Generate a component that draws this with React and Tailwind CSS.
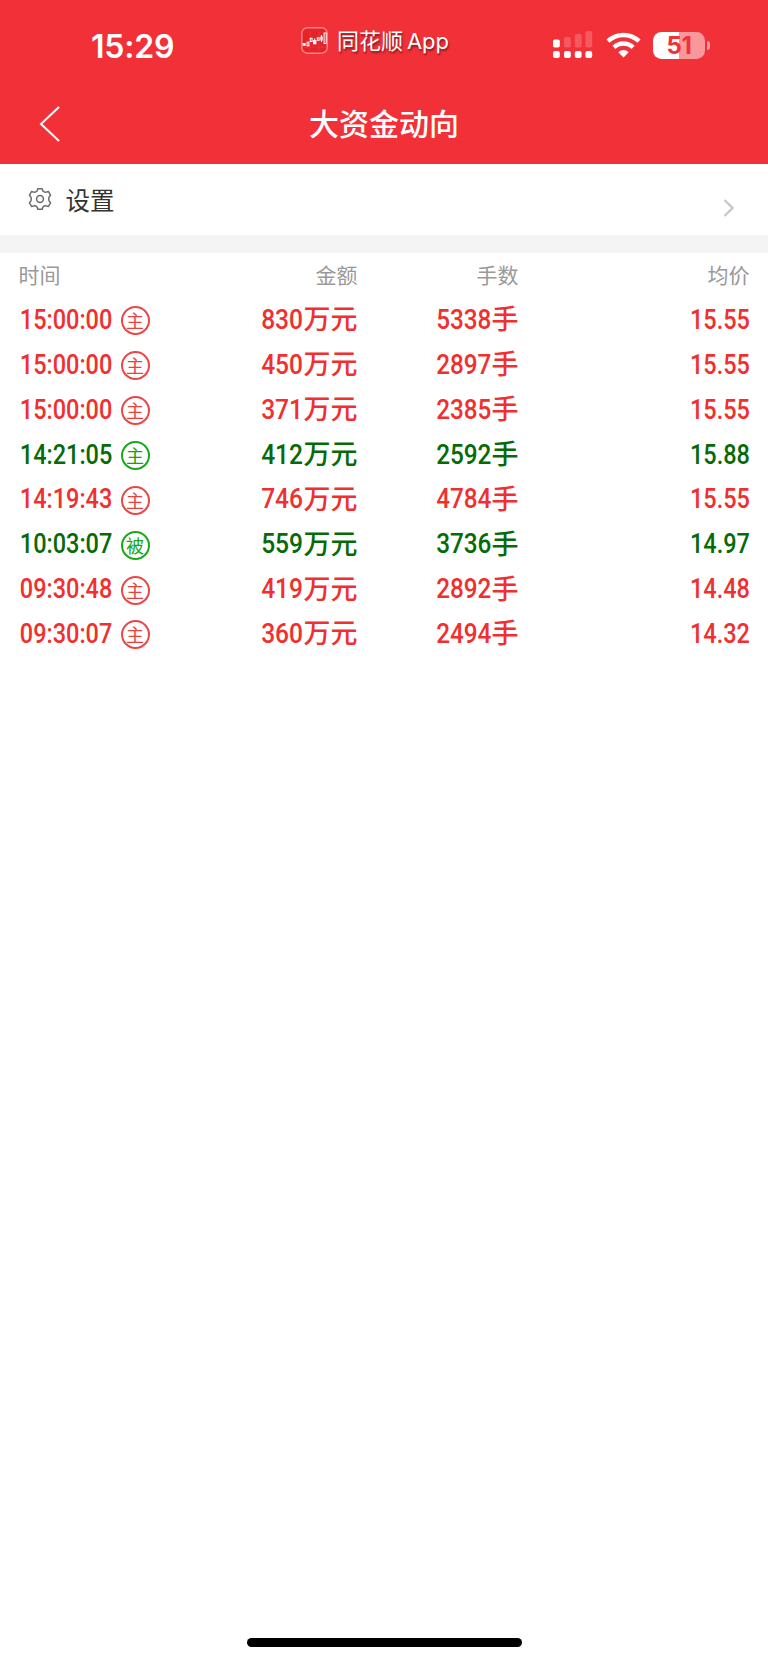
import clsx from 'clsx';

const TRADES = [
    { time: '15:00:00', kind: '主', amount: '830', hands: '5338', price: '15.55', side: 'buy' },
    { time: '15:00:00', kind: '主', amount: '450', hands: '2897', price: '15.55', side: 'buy' },
    { time: '15:00:00', kind: '主', amount: '371', hands: '2385', price: '15.55', side: 'buy' },
    { time: '14:21:05', kind: '主', amount: '412', hands: '2592', price: '15.88', side: 'sell' },
    { time: '14:19:43', kind: '主', amount: '746', hands: '4784', price: '15.55', side: 'buy' },
    { time: '10:03:07', kind: '被', amount: '559', hands: '3736', price: '14.97', side: 'sell' },
    { time: '09:30:48', kind: '主', amount: '419', hands: '2892', price: '14.48', side: 'buy' },
    { time: '09:30:07', kind: '主', amount: '360', hands: '2494', price: '14.32', side: 'buy' },
];

const SIDE_CONFIG = {
    buy:  { text: 'text-[#f0302e]', badge: 'border-[#ec4646] text-[#ea4040]' },
    sell: { text: 'text-[#066b06]', badge: 'border-[#1aa81a] text-[#14a514]' },
};

const COLUMNS = 'grid grid-cols-[140px_199px_161px_231px] pl-[18.5px]';

function SignalIcon() {
    return (
        <svg className="h-[28px] w-[40px]" viewBox="0 0 40 28" fill="white">
            <rect x="0" y="8.5" width="6.8" height="8" rx="1.7" />
            <rect x="11" y="6" width="6.8" height="10.5" rx="1.7" opacity=".2" />
            <rect x="21.8" y="3" width="6.8" height="13.5" rx="1.7" opacity=".2" />
            <rect x="32.4" y="0" width="6.8" height="16.5" rx="1.7" opacity=".2" />
            {[0, 11, 21.8, 32.4].map(x => <rect key={x} x={x} y="20" width="6.8" height="7" rx="2" />)}
        </svg>
    );
}

function WifiIcon() {
    return (
        <svg className="h-[26px] w-[35px]" viewBox="0 0 35 26" fill="none" stroke="white" strokeWidth="4.4">
            <path d="M2 9.2a22.3 22.3 0 0 1 31 0" />
            <path d="M7.9 15.4a13.8 13.8 0 0 1 19.2 0" />
            <path d="M17.5 25.5l-5.2-5.3a7.5 7.5 0 0 1 10.4 0z" fill="white" stroke="none" />
        </svg>
    );
}

function Battery() {
    return (
        <div className="flex items-center gap-[2px]">
            <div className="flex h-[27px] w-[52px] items-center justify-center rounded-[8.5px] bg-linear-to-r from-white from-50% to-[#f8989b] to-50% pt-px font-['Inter'] text-[24px] font-bold leading-none tracking-[-0.3px] text-[#f23038]">
                51
            </div>
            <div className="h-[9px] w-[3px] rounded-r-full bg-[#f8989b]" />
        </div>
    );
}

function AppLogo() {
    return (
        <svg className="h-[27px] w-[27px]" viewBox="0 0 27 27" fill="none">
            <rect x=".8" y=".8" width="25.4" height="25.4" rx="5.5" fill="#e5242a" stroke="#f98589" strokeWidth="1.4" />
            <path d="M2 20h23M9 4v19M18 4v19" stroke="#ea3c40" strokeWidth=".6" />
            <g fill="white">
                <rect x="1.5" y="16" width="3.2" height="2.8" />
                <rect x="12" y="13" width="3.4" height="4.3" />
                <rect x="19.3" y="9.5" width="2.4" height="4" />
            </g>
            <g stroke="white" strokeWidth="1">
                <rect x="6.1" y="15.2" width="1.8" height="3.6" />
                <rect x="9.3" y="11.3" width="1.8" height="3.2" />
                <rect x="16.3" y="10.8" width="1.8" height="2.5" />
                <rect x="23.1" y="6" width="2.1" height="10.5" />
                <path d="M13.7 11.5V13M20.5 8v7" />
            </g>
        </svg>
    );
}

function GearIcon() {
    return (
        <svg className="h-[24px] w-[24px]" viewBox="0 0 24 24" fill="none" stroke="#6b6b6b" strokeWidth="1.5" strokeLinejoin="round">
            <path d="M9.8 1.7h4.4l.7 2.3q1.7 1.7 4 .9l1.6-.4 2.1 3.8-1.5 1.6q-.8 2.1 0 4.2l1.5 1.6-2.1 3.8-1.6-.4q-2.3-.8-4 .9l-.7 2.300H9.8l-.7-2.300q-1.7-1.7-4-.9l-1.6.4-2.100-3.800 1.500-1.600q.8-2.100 0-4.200L1.400 8.300l2.100-3.800 1.600.4q2.300.8 4-.9z" />
            <circle cx="12" cy="12" r="3.4" />
        </svg>
    );
}

function TradeRow({ trade }) {
    const cfg = SIDE_CONFIG[trade.side];
    return (
        <div className={clsx(COLUMNS, "h-[44.87px] items-center font-['Roboto','Noto_Sans_CJK_SC',sans-serif] text-[27px] font-medium leading-none", cfg.text)}>
            <div className="flex items-center">
                <div className="flex w-[94px] justify-end pt-[2px]">
                    <span className="origin-right scale-x-[.87]">{trade.time}</span>
                </div>
                <span className={clsx("mt-[3px] ml-[8px] flex h-[29px] w-[29px] shrink-0 items-center justify-center rounded-full border-2 pb-px font-['Noto_Sans_CJK_SC',sans-serif] text-[18px] font-normal leading-none", cfg.badge)}>
                    {trade.kind}
                </span>
            </div>
            <div className="flex items-center justify-end">
                <span className="origin-right scale-x-[.91] pt-[2px]">{trade.amount}</span>
                <span className="pb-[3px] font-['Noto_Sans_CJK_SC',sans-serif]">万元</span>
            </div>
            <div className="flex items-center justify-end">
                <span className="origin-right scale-x-[.9] pt-[2px]">{trade.hands}</span>
                <span className="pb-[3px] font-['Noto_Sans_CJK_SC',sans-serif]">手</span>
            </div>
            <div className="flex justify-end pt-[2px]">
                <span className="origin-right scale-x-[.87]">{trade.price}</span>
            </div>
        </div>
    );
}

export default function App() {
    return (
        <div className="flex h-[1662px] w-[768px] flex-col overflow-hidden bg-white font-['Noto_Sans_CJK_SC',sans-serif]">
            <header className="h-[163.5px] shrink-0 bg-[#f23038] text-white">
                {/* Status bar */}
                <div className="flex h-[86px]">
                    <div className="w-[301px] pl-[91px] pt-[31px] font-['Inter'] text-[32px] font-semibold leading-[32px] tracking-[-0.2px]">15:29</div>
                    <div className="flex h-[81px] w-[252px] items-center">
                        <AppLogo />
                        <span className="ml-[9px] pb-px text-[22px] leading-none [text-shadow:1px_2px_2px_rgba(0,0,0,.45)]">
                            同花顺 <span className="-ml-px font-['Inter'] text-[22px]">App</span>
                        </span>
                    </div>
                    <div className="flex h-[90px] items-center">
                        <SignalIcon />
                        <div className="ml-[13px]"><WifiIcon /></div>
                        <div className="ml-[12px]"><Battery /></div>
                    </div>
                </div>
                {/* Title bar */}
                <div className="grid h-[76px] grid-cols-[80px_1fr_80px] items-center">
                    <svg className="ml-[39px] h-[38px] w-[22px]" viewBox="0 0 22 38" fill="none" stroke="white" strokeWidth="2">
                        <path d="M20 2L2 19l18 17" />
                    </svg>
                    <h1 className="pb-[4px] text-center text-[30px] font-medium leading-none">大资金动向</h1>
                </div>
            </header>

            <div className="flex h-[71.5px] shrink-0 items-center pl-[28px] pr-[34px]">
                <GearIcon />
                <span className="ml-[13.5px] pt-px text-[24.5px] leading-none text-[#333]">设置</span>
                <svg className="ml-auto mt-[18px] h-[18px] w-[11px]" viewBox="0 0 11 18" fill="none" stroke="#c8c8c8" strokeWidth="2.4">
                    <path d="M1.5 1l8 8-8 8" />
                </svg>
            </div>
            <div className="h-[18px] shrink-0 bg-[#f4f4f4]" />

            <main className="flex-1">
                <div className={clsx(COLUMNS, 'h-[44px] items-center pb-[2px] text-[21px] leading-none text-[#999]')}>
                    <span>时间</span>
                    <span className="text-right">金额</span>
                    <span className="text-right">手数</span>
                    <span className="text-right">均价</span>
                </div>
                {TRADES.map((trade, i) => <TradeRow key={i} trade={trade} />)}
            </main>

            <div className="mx-auto mb-[15px] h-[9px] w-[275px] shrink-0 rounded-full bg-black" />
        </div>
    );
}
